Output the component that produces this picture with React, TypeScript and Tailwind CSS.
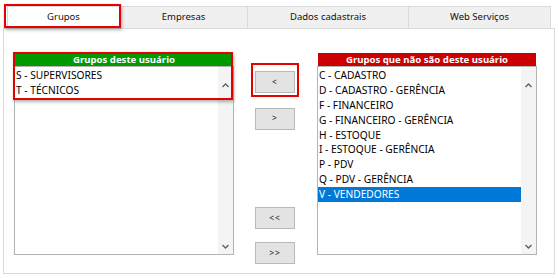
import React from 'react';

const tabs = [
  { label: 'Grupos', w: 'w-[113px]', active: true },
  { label: 'Empresas', w: 'w-[129px]', active: false },
  { label: 'Dados cadastrais', w: 'w-[162px]', active: false },
  { label: 'Web Serviços', w: 'w-[143px]', active: false },
];

const userGroups = ['S - SUPERVISORES', 'T - TÉCNICOS'];

const otherGroups = [
  'C - CADASTRO',
  'D - CADASTRO - GERÊNCIA',
  'F - FINANCEIRO',
  'G - FINANCEIRO - GERÊNCIA',
  'H - ESTOQUE',
  'I - ESTOQUE - GERÊNCIA',
  'P - PDV',
  'Q - PDV - GERÊNCIA',
  'V - VENDEDORES',
];

const Chevron = ({ up }: { up?: boolean }) => (
  <svg width="7" height="5" viewBox="0 0 7 5" className="block">
    <polyline
      points={up ? '0.5,4 3.5,1 6.5,4' : '0.5,1 3.5,4 6.5,1'}
      fill="none"
      stroke="#606060"
      strokeWidth="1.4"
    />
  </svg>
);

interface ListProps {
  title: string;
  headerClass: string;
  items: string[];
  selected?: string;
}

const GroupList: React.FC<ListProps> = ({ title, headerClass, items, selected }) => (
  <div className="flex w-[220px] flex-col">
    <div className={`mx-px h-[13px] text-center text-[9.6px] font-bold leading-[13px] text-white ${headerClass}`}>
      {title}
    </div>
    <div className="flex h-[189px] border border-[#b4b4b4] bg-white">
      <div className="flex-1 pt-[1px]">
        {items.map((item) => (
          <div
            key={item}
            className={`h-[14.9px] pl-[1px] text-[10.2px] leading-[15px] ${
              item === selected ? 'mr-[-3px] bg-[#0078d7] text-white' : 'text-black'
            }`}
          >
            {item}
          </div>
        ))}
      </div>
      <div className="flex w-[15px] flex-col items-center justify-between bg-[#f4f4f4] pb-[5px] pt-[16px]">
        <Chevron up />
        <Chevron />
      </div>
    </div>
  </div>
);

const MoveButton = ({ label }: { label: string }) => (
  <button className="h-[22px] w-[40px] border border-[#b9b9b9] bg-[#e3e3e3] text-[8.5px] leading-none tracking-[1px] text-[#222]">
    {label}
  </button>
);

export default function App() {
  return (
    <div className="relative h-[278px] w-[558px] overflow-hidden bg-white font-['Noto_Sans',sans-serif] text-black">
      <div className="flex h-[28px] items-end pl-[7px]">
        {tabs.map((t) => (
          <div
            key={t.label}
            className={`${t.w} -mr-px flex h-[22px] items-center justify-center border border-b-0 border-[#dadada] text-[9.5px] text-[#111] ${
              t.active ? 'bg-white' : 'bg-[#f0f0f0]'
            }`}
          >
            {t.label}
          </div>
        ))}
      </div>
      <div className="mx-[3px] flex h-[246px] border border-[#dadada] pl-[10px] pt-[24px]">
        <GroupList title="Grupos deste usuário" headerClass="bg-[#009a00]" items={userGroups} />
        <div className="ml-[21px] mr-[22px] flex flex-col">
          <div className="mt-[14px] outline-2 outline-offset-2 outline-[#e60000]">
            <MoveButton label="<" />
          </div>
          <div className="mt-[10px]">
            <MoveButton label=">" />
          </div>
          <div className="mt-[73px]">
            <MoveButton label="<<" />
          </div>
          <div className="mt-[9px]">
            <MoveButton label=">>" />
          </div>
        </div>
        <GroupList
          title="Grupos que não são deste usuário"
          headerClass="bg-[#cc0000]"
          items={otherGroups}
          selected="V - VENDEDORES"
        />
      </div>
      {/* annotation boxes */}
      <div className="pointer-events-none absolute left-[4px] top-[4px] h-[24px] w-[117px] border-2 border-[#e60000] shadow-[1px_2px_3px_rgba(0,0,0,0.3)]" />
      <div className="pointer-events-none absolute left-[13px] top-[52px] h-[48px] w-[220px] border-2 border-[#e60000] shadow-[1px_2px_3px_rgba(0,0,0,0.3)]" />
    </div>
  );
}
